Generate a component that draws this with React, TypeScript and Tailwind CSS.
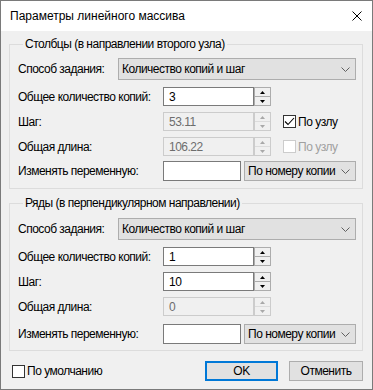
import clsx from "clsx";

function Chevron() {
  return (
    <svg width="9" height="5" viewBox="0 0 9 5" className="shrink-0">
      <path d="M0.5 0.5 L4.5 4.5 L8.5 0.5" fill="none" stroke="#606060" strokeWidth="1" />
    </svg>
  );
}

function Tri({ up, disabled }: { up?: boolean; disabled?: boolean }) {
  return (
    <svg width="5" height="3" viewBox="0 0 5 3">
      <path d={up ? "M2.5 0 L5 3 L0 3 Z" : "M0 0 L5 0 L2.5 3 Z"} fill={disabled ? "#a8a8a8" : "#000"} />
    </svg>
  );
}

function Combo({ text, className }: { text: string; className: string }) {
  return (
    <div
      className={clsx(
        "flex items-center justify-between border border-[#adadad] bg-[#e1e1e1] pl-[3px] pr-[5px] whitespace-nowrap",
        className
      )}
    >
      <span>{text}</span>
      <Chevron />
    </div>
  );
}

function Spin({ value, disabled }: { value: string; disabled?: boolean }) {
  return (
    <div className="flex h-[19px]">
      <div
        className={clsx(
          "w-[91px] border pl-[5px] flex items-center",
          disabled ? "border-[#cccccc] bg-[#f0f0f0] text-[#6d6d6d]" : "border-[#7a7a7a] bg-white"
        )}
      >
        {value}
      </div>
      <div
        className={clsx(
          "w-[17px] border flex flex-col bg-[#f0f0f0]",
          disabled ? "border-[#cccccc]" : "border-[#acacac]"
        )}
      >
        <div
          className={clsx(
            "flex-1 flex items-center justify-center border-b",
            disabled ? "border-[#dcdcdc]" : "border-[#acacac]"
          )}
        >
          <Tri up disabled={disabled} />
        </div>
        <div className="flex-1 flex items-center justify-center">
          <Tri disabled={disabled} />
        </div>
      </div>
    </div>
  );
}

function Check({ checked, disabled, label }: { checked?: boolean; disabled?: boolean; label: string }) {
  return (
    <div className="flex items-center gap-[2px]">
      <div
        className={clsx(
          "w-[13px] h-[13px] border bg-white flex items-center justify-center",
          disabled ? "border-[#cccccc]" : "border-[#333333]"
        )}
      >
        {checked && (
          <svg width="11" height="11" viewBox="0 0 11 11">
            <path d="M1 5.5 L4 8.5 L10 2" fill="none" stroke="#000" strokeWidth="1.1" />
          </svg>
        )}
      </div>
      <span className={disabled ? "text-[#a0a0a0]" : ""}>{label}</span>
    </div>
  );
}

function Group({
  title,
  rows,
  first,
}: {
  title: string;
  rows: { step: string; stepDis?: boolean; count: string; len: string; checks?: boolean };
  first?: boolean;
}) {
  return (
    <fieldset
      className={clsx(
        "border border-[#dcdcdc] pl-[8px] pr-[6px]",
        first ? "pb-[7px]" : "mt-[7px] pb-[6px]"
      )}
    >
      <legend className="ml-[5px] px-[2px] leading-[14px]">{title}</legend>
      <div className={clsx("flex items-center h-[22px]", first ? "mt-[7px]" : "mt-[8px]")}>
        <span className="w-[100px]">Способ задания:</span>
        <Combo text="Количество копий и шаг" className="flex-1 h-[22px]" />
      </div>
      <div className="flex items-center mt-[7px]">
        <span className="w-[145px] whitespace-nowrap">Общее количество копий:</span>
        <Spin value={rows.count} />
      </div>
      <div className="flex items-center mt-[6px]">
        <span className="w-[145px]">Шаг:</span>
        <Spin value={rows.step} disabled={rows.stepDis} />
        {rows.checks && (
          <div className="ml-[12px]">
            <Check checked label="По узлу" />
          </div>
        )}
      </div>
      <div className="flex items-center mt-[6px]">
        <span className="w-[145px]">Общая длина:</span>
        <Spin value={rows.len} disabled />
        {rows.checks && (
          <div className="ml-[12px]">
            <Check disabled label="По узлу" />
          </div>
        )}
      </div>
      <div className={clsx("flex items-center h-[20px]", first ? "mt-[5px]" : "mt-[8px]")}>
        <span className="w-[145px] whitespace-nowrap">Изменять переменную:</span>
        <div className="w-[78px] h-[20px] border border-[#7a7a7a] bg-white" />
        <Combo text="По номеру копии" className="ml-[3px] flex-1 h-[20px]" />
      </div>
    </fieldset>
  );
}

export default function App() {
  return (
    <div className="w-[373px] h-[390px] border border-[#7a7a7a] bg-[#f0f0f0] flex flex-col text-[12px] text-black font-['Liberation_Sans',Arial,sans-serif] leading-[14px]">
      <div className="h-[30px] bg-white flex items-center justify-between pl-[9px] pr-[10px]">
        <span className="text-[12px]">Параметры линейного массива</span>
        <svg width="10" height="10" viewBox="0 0 10 10">
          <path d="M0.5 0.5 L9.5 9.5 M9.5 0.5 L0.5 9.5" stroke="#000" strokeWidth="1" />
        </svg>
      </div>
      <div className="flex flex-col pl-[8px] pr-[9px] pt-[6px] tracking-[-0.5px]">
        <Group
          first
          title="Столбцы (в направлении второго узла)"
          rows={{ count: "3", step: "53.11", stepDis: true, len: "106.22", checks: true }}
        />
        <Group
          title="Ряды (в перпендикулярном направлении)"
          rows={{ count: "1", step: "10", len: "0" }}
        />
        <div className="flex items-center mt-[10px]">
          <div className="ml-[3px]">
            <Check label="По умолчанию" />
          </div>
          <button className="ml-auto w-[73px] h-[20px] border-2 border-[#0078d7] bg-[#e1e1e1] tracking-[-0.5px]">OK</button>
          <button className="ml-[11px] w-[74px] h-[20px] border border-[#adadad] bg-[#e1e1e1] tracking-[-0.5px]">Отменить</button>
        </div>
      </div>
    </div>
  );
}
